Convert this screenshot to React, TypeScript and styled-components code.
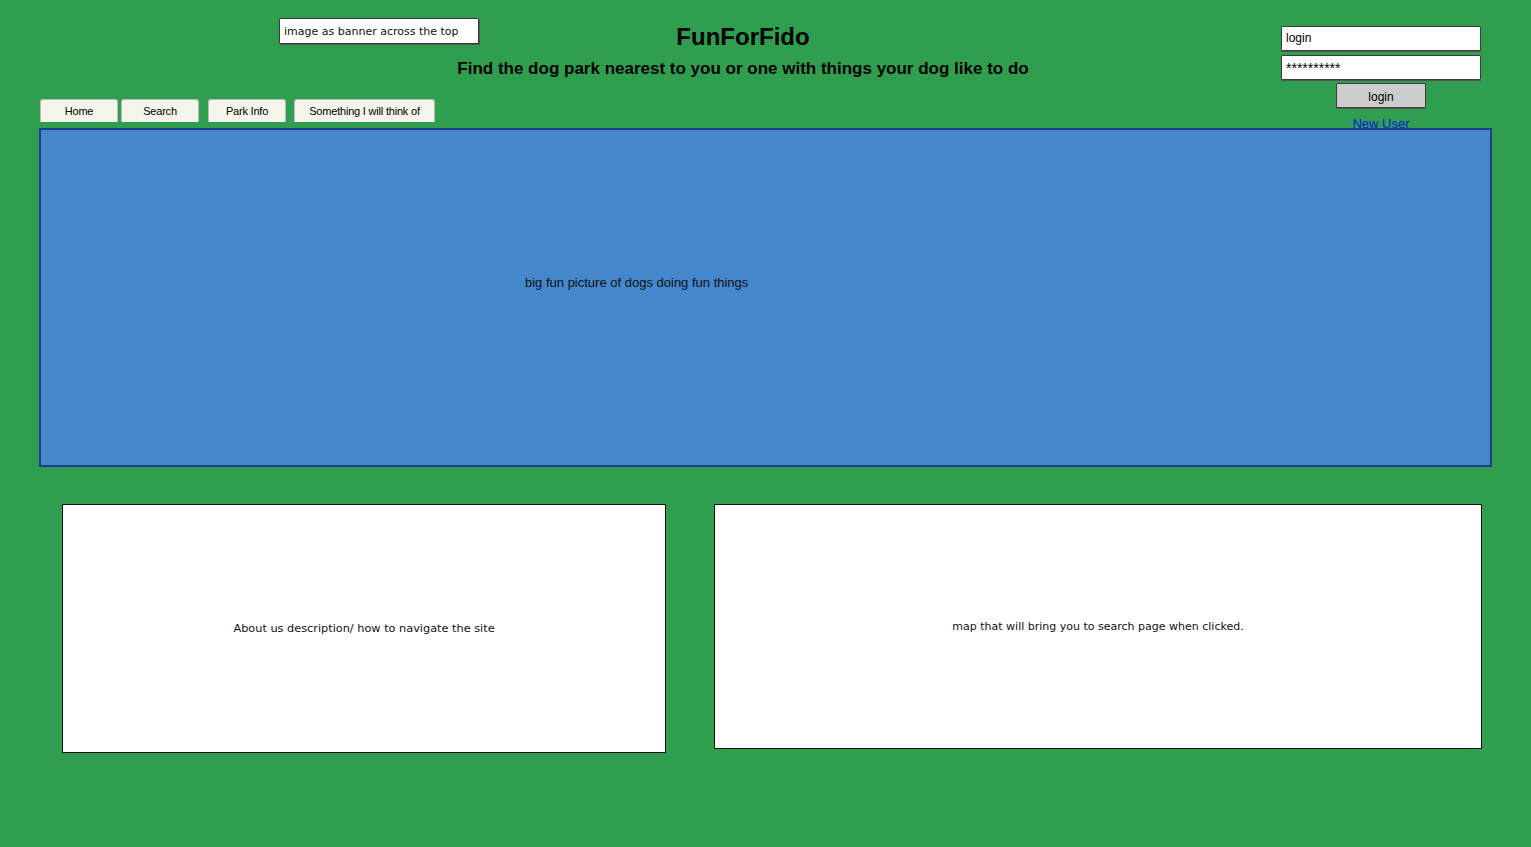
import React from "react";
import styled, { createGlobalStyle } from "styled-components";

const Global = createGlobalStyle`
  html, body { margin: 0; padding: 0; }
  body {
    background: #2f9e4f;
    width: 1531px;
    height: 847px;
    overflow: hidden;
    font-family: "Liberation Sans", Arial, sans-serif;
  }
`;

const sketch = `"Comic Sans MS", "DejaVu Sans", sans-serif`;

const Page = styled.div`
  display: flex;
  flex-direction: column;
  padding: 0 39px;
  box-sizing: border-box;
  width: 1531px;
  height: 847px;
  background: #2f9e4f;
`;

const TopRow = styled.header`
  display: grid;
  grid-template-columns: 418px 572px 1fr 200px;
  height: 99px;
  padding-right: 11px;
`;

const BannerCell = styled.div`
  padding: 18px 0 0 240px;
`;

const BannerBox = styled.div`
  width: 200px;
  height: 26px;
  box-sizing: border-box;
  background: #fff;
  border: 1px solid #3a3a3a;
  border-radius: 1px;
  box-shadow: 1px 1px 0 #555;
  font-family: ${sketch};
  font-size: 11px;
  line-height: 25px;
  padding-left: 4px;
  color: #111;
  white-space: nowrap;
`;

const TitleBlock = styled.div`
  display: flex;
  flex-direction: column;
  align-items: center;
  padding-top: 22px;
  white-space: nowrap;
`;

const Title = styled.h1`
  margin: 0;
  font-size: 24px;
  font-weight: bold;
  line-height: 30px;
  color: #000;
`;

const Subtitle = styled.h2`
  margin: 7px 0 0;
  font-size: 17px;
  font-weight: bold;
  line-height: 20px;
  color: #000;
`;

const LoginCol = styled.div`
  grid-column: 4;
  display: flex;
  flex-direction: column;
  align-items: center;
  padding-top: 26px;
  gap: 4px;
  position: relative;
  z-index: 2;
`;

const Field = styled.div<{ $stars?: boolean }>`
  width: 200px;
  height: 25px;
  box-sizing: border-box;
  background: #fff;
  border: 1px solid #3d3d3d;
  border-radius: 1px;
  box-shadow: 0 1px 0 #555;
  font-size: ${(p) => (p.$stars ? "14px" : "12px")};
  line-height: ${(p) => (p.$stars ? "24px" : "23px")};
  padding-left: 4px;
  color: #000;
`;

const LoginButton = styled.div`
  width: 90px;
  height: 25px;
  box-sizing: border-box;
  margin-top: -1px;
  background: #cdcdcd;
  border: 1px solid #3d3d3d;
  border-radius: 1px;
  box-shadow: 0 1px 0 #555;
  font-size: 12px;
  line-height: 26px;
  text-align: center;
  color: #000;
`;

const NewUser = styled.a`
  margin-top: 4px;
  font-size: 13px;
  line-height: 16px;
  color: #0a14e6;
  text-decoration: none;
`;

const Tabs = styled.nav`
  display: flex;
  height: 23px;
  position: relative;
  z-index: 1;
`;

const Tab = styled.div<{ $w: number; $ml: number }>`
  width: ${(p) => p.$w}px;
  margin-left: ${(p) => p.$ml}px;
  height: 23px;
  box-sizing: border-box;
  background: #f4f4ea;
  border: 1px solid #b8bcc0;
  border-bottom: none;
  border-radius: 3px 3px 0 0;
  font-size: 11px;
  line-height: 23px;
  text-align: center;
  color: #000;
  white-space: nowrap;
  letter-spacing: -0.2px;
`;

const Hero = styled.section`
  margin-top: 6px;
  height: 339px;
  box-sizing: border-box;
  background: #4487cc;
  border: 2px solid #1d3d8e;
  padding: 145px 0 0 484px;
  font-size: 13px;
  line-height: 16px;
  color: #111;
`;

const BottomRow = styled.div`
  display: grid;
  grid-template-columns: 604px 768px;
  column-gap: 48px;
  align-items: start;
  margin: 37px 0 0 23px;
`;

const Card = styled.div<{ $h: number; $fs: number }>`
  height: ${(p) => p.$h}px;
  box-sizing: border-box;
  background: #fff;
  border: 1px solid #111;
  display: flex;
  align-items: center;
  justify-content: center;
  font-family: ${sketch};
  font-size: ${(p) => p.$fs}px;
  color: #111;
`;

export default function App() {
  return (
    <>
      <Global />
      <Page>
        <TopRow>
          <BannerCell>
            <BannerBox>image as banner across the top</BannerBox>
          </BannerCell>
          <TitleBlock>
            <Title>FunForFido</Title>
            <Subtitle>Find the dog park nearest to you or one with things your dog like to do</Subtitle>
          </TitleBlock>
          <LoginCol>
            <Field>login</Field>
            <Field $stars>**********</Field>
            <LoginButton>login</LoginButton>
            <NewUser href="#">New User</NewUser>
          </LoginCol>
        </TopRow>
        <Tabs>
          <Tab $w={78} $ml={1}>Home</Tab>
          <Tab $w={78} $ml={3}>Search</Tab>
          <Tab $w={78} $ml={9}>Park Info</Tab>
          <Tab $w={141} $ml={8}>Something I will think of</Tab>
        </Tabs>
        <Hero>big fun picture of dogs doing fun things</Hero>
        <BottomRow>
          <Card $h={249} $fs={11.3}>About us description/ how to navigate the site</Card>
          <Card $h={245} $fs={11}>map that will bring you to search page when clicked.</Card>
        </BottomRow>
      </Page>
    </>
  );
}
